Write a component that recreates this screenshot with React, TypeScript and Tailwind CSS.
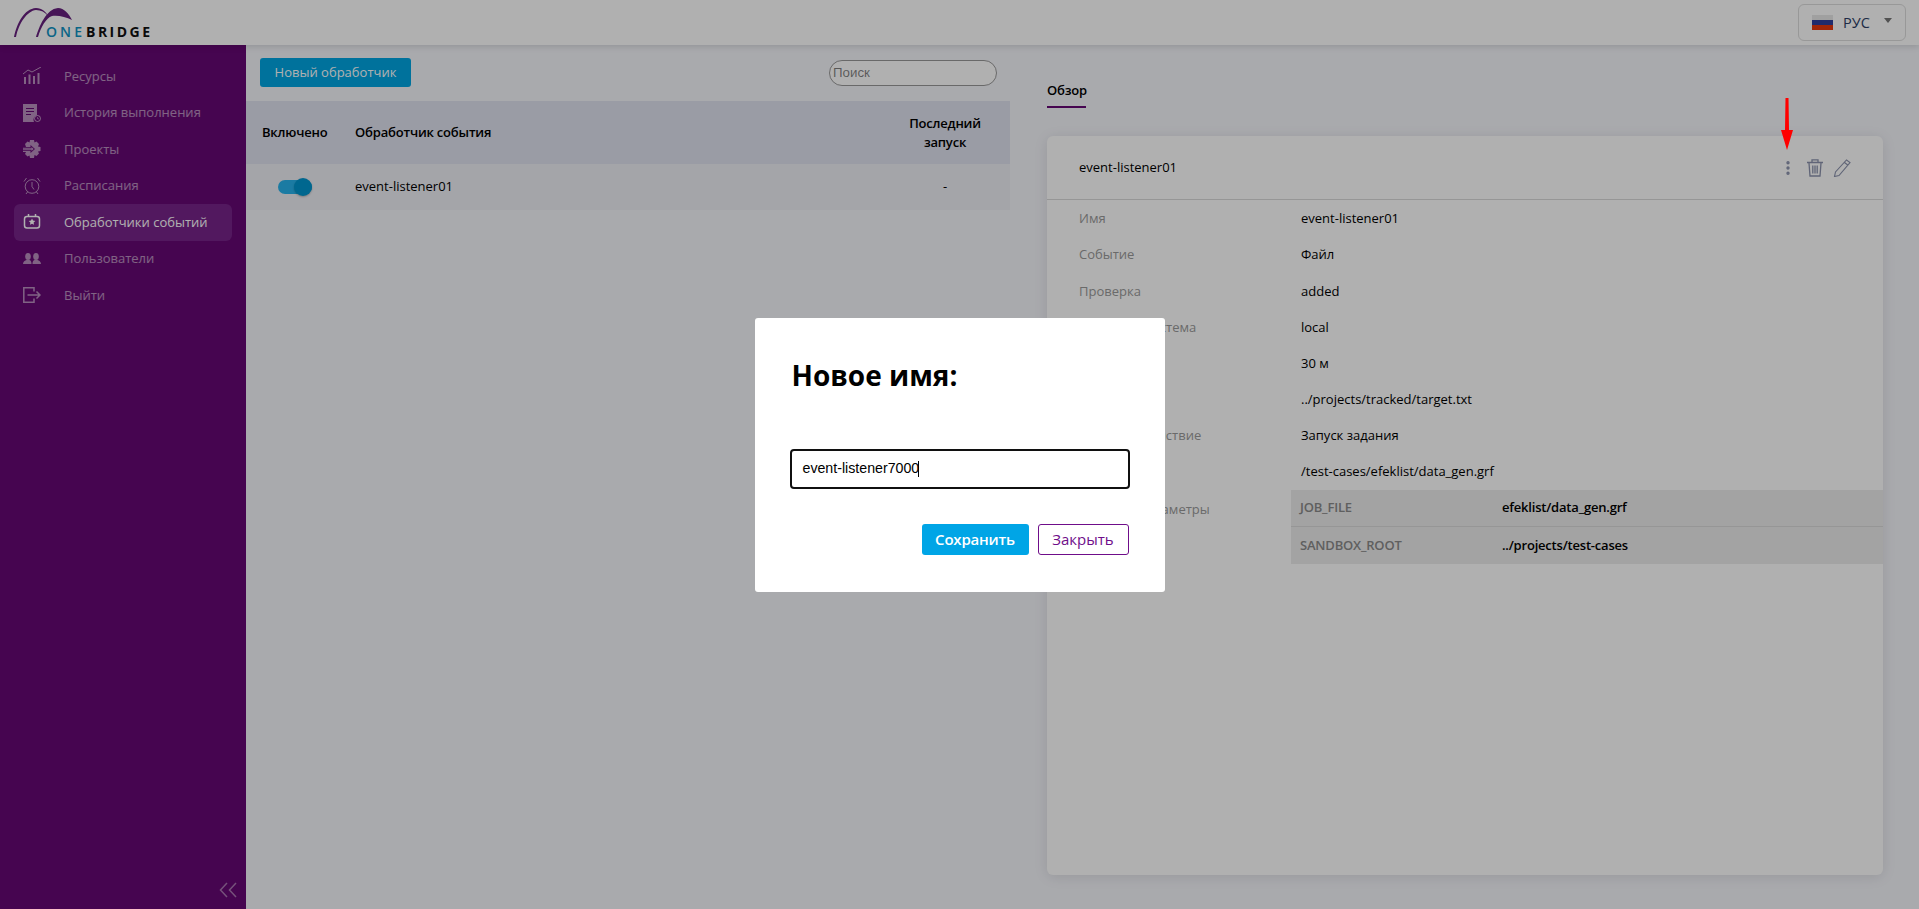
import { MoreVertical } from 'lucide-react';

const menu = [
  { label: 'Ресурсы', icon: <ChartIcon /> },
  { label: 'История выполнения', icon: <HistoryIcon /> },
  { label: 'Проекты', icon: <GearIcon /> },
  { label: 'Расписания', icon: <AlarmIcon /> },
  { label: 'Обработчики событий', icon: <EventIcon />, active: true },
  { label: 'Пользователи', icon: <UsersIcon /> },
  { label: 'Выйти', icon: <LogoutIcon /> },
];

const details = [
  ['Имя', 'event-listener01'],
  ['Событие', 'Файл'],
  ['Проверка', 'added'],
  ['Файловая система', 'local'],
  ['Интервал', '30 м'],
  ['Путь', '../projects/tracked/target.txt'],
  ['Ответное действие', 'Запуск задания'],
  ['Задание', '/test-cases/efeklist/data_gen.grf'],
];

function ChartIcon() {
  return (
    <svg viewBox="0 0 18 18" className="w-[18px] h-[18px]" fill="none" stroke="currentColor">
      <path d="M0 7 L5 3 L9 5 L18 0" strokeWidth="1" />
      <path d="M2 10v7M6.500 7.500v9.500M11 9v8M15.500 6v11" strokeWidth="2" />
    </svg>
  );
}

function HistoryIcon() {
  return (
    <svg viewBox="0 0 18 18" className="w-[18px] h-[18px]" fill="currentColor">
      <path d="M0 0h14v11a5 5 0 0 0-3 7H0z" />
      <path d="M3 4h8v1H3zM3 7h8v1H3zM3 10h5v1H3z" fill="#660874" />
      <circle cx="14.500" cy="14.500" r="3" fill="none" stroke="currentColor" />
      <path d="M14.500 13v1.800h1.500" fill="none" stroke="currentColor" strokeWidth="0.700" />
    </svg>
  );
}

function GearIcon() {
  return (
    <svg viewBox="0 0 18 18" className="w-[18px] h-[18px]" fill="currentColor">
      <path d="M7 0h4l.5 2.500 2-1 2.500 2.500-1 2.500 2.500.5v4l-2.500.5 1 2-2.500 2.500-2-1L11 18H7l-.5-2.500-2 1L2 14l1-2H0V7h3L2 4l2.500-2.500 2 1z" />
      <path d="M0 7.300h7.500V5l4.500 4-4.500 4v-2.300H0z" fill="#660874" />
      <path d="M0 8.300h8.500V7l2.200 2-2.200 2V9.700H0z" />
    </svg>
  );
}

function AlarmIcon() {
  return (
    <svg viewBox="0 0 18 18" className="w-[18px] h-[18px]" fill="none" stroke="currentColor" strokeWidth="1">
      <circle cx="9" cy="9.500" r="6.800" />
      <path d="M9 5v4.500l2 3" />
      <path d="M1 4.500 3.500 1M17 4.500 14.500 1M3 17l1.500-2M15 17l-1.500-2" />
    </svg>
  );
}

function EventIcon() {
  return (
    <svg viewBox="0 0 18 18" className="w-[18px] h-[18px]" fill="none" stroke="currentColor" strokeWidth="1.500">
      <rect x="1.500" y="3.500" width="15" height="11.500" rx="2.500" />
      <path d="M5.500 1v3M12.500 1v3" />
      <path d="m9 5.500 1 2.100 2.300.3-1.700 1.600.4 2.300-2-1.100-2 1.100.4-2.300-1.700-1.600 2.300-.3z" fill="currentColor" stroke="none" />
    </svg>
  );
}

function UsersIcon() {
  return (
    <svg viewBox="0 0 18 12" className="w-[18px] h-[12px]" fill="currentColor">
      <ellipse cx="5" cy="3.500" rx="2.800" ry="3.500" />
      <ellipse cx="13" cy="3.500" rx="2.800" ry="3.500" />
      <path d="M0 11c0-2.500 2-3.500 3.500-4h3C8 7.500 8.500 9 8.500 11zM9.500 11c0-2 .5-3.500 2-4h3c1.500.5 3.500 1.500 3.500 4z" />
    </svg>
  );
}

function LogoutIcon() {
  return (
    <svg viewBox="0 0 18 16" className="w-[18px] h-[16px]" fill="none" stroke="currentColor" strokeWidth="1.500">
      <path d="M11 4.500V.800H.8v14.400H11v-3.700" />
      <path d="M4.500 8h12.500M13.500 4.500 17 8l-3.500 3.500" />
    </svg>
  );
}

function Logo() {
  return (
    <svg viewBox="0 0 160 40" className="w-[160px] h-[40px]">
      <path d="M14 34C17 20 24 6 36 5c6 0 10 4 12 8-3-4-7-6-12-6C27 8 19 20 16 34z" fill="#67207e" />
      <path d="M36 34c3-10 10-28 22-29 6 0 11 6 14 12-6-3-14-5-20-4C46 15 41 24 38 34z" fill="#67207e" />
      <text x="46" y="33.500" fontFamily="'Open Sans', sans-serif" fontSize="14" fontWeight="600" textLength="36" lengthAdjust="spacing" fill="#0f93c4">ONE</text>
      <text x="86" y="33.500" fontFamily="'Open Sans', sans-serif" fontSize="14" fontWeight="700" textLength="64" lengthAdjust="spacing" fill="#111111">BRIDGE</text>
    </svg>
  );
}

export default function App() {
  return (
    <div className="relative h-[909px] w-full overflow-hidden flex flex-col bg-[#f5f6fb] font-['Open_Sans',sans-serif] text-[13px] text-black">
      {/* Header */}
      <header className="h-[45px] shrink-0 bg-white flex items-center justify-between pr-[13px] shadow-[0_2px_6px_rgba(0,0,0,0.12)] z-10">
        <Logo />
        <button className="h-[37px] w-[108px] border border-[#dcdcdc] rounded-md flex items-center pl-[13px] text-[#2d3e66] text-[14.500px]">
          <span className="w-[21px] h-[15px] flex flex-col mr-[10px]">
            <span className="flex-1 bg-[#e8e8e8]" />
            <span className="flex-1 bg-[#2f3f9e]" />
            <span className="flex-1 bg-[#e8380c]" />
          </span>
          РУС
          <span className="ml-[14px] mb-[4px] w-0 h-0 border-x-[4px] border-x-transparent border-t-[5px] border-t-[#777777]" />
        </button>
      </header>

      <div className="flex flex-1 min-h-0">
        {/* Sidebar */}
        <aside className="w-[246px] shrink-0 bg-[#660874] flex flex-col pt-[13px]">
          <nav className="flex flex-col">
            {menu.map((item) => (
              <a
                key={item.label}
                className={
                  item.active
                    ? 'mx-[14px] h-[36.500px] flex items-center pl-[9px] rounded-md bg-[#77248a] text-white'
                    : 'mx-[14px] h-[36.500px] flex items-center pl-[9px] rounded-md text-white/55'
                }
              >
                <span className="w-[18px] flex justify-center shrink-0">{item.icon}</span>
                <span className="ml-[23px] text-[13px]">{item.label}</span>
              </a>
            ))}
          </nav>
          <div className="mt-auto flex justify-end pr-[9px] pb-[11px] text-white/45">
            <svg viewBox="0 0 18 16" className="w-[18px] h-[16px]" fill="none" stroke="currentColor" strokeWidth="1.500">
              <path d="M8 1 1.500 8 8 15M17 1l-6.500 7 6.500 7" />
            </svg>
          </div>
        </aside>

        {/* Event listener list */}
        <section className="w-[764px] shrink-0 pt-[13px]">
          <div className="flex items-center justify-between pl-[14px] pr-[13px] h-[29px]">
            <button className="h-[29px] w-[151px] rounded-[3px] bg-[#00a6e3] text-white text-[13px]">Новый обработчик</button>
            <input
              placeholder="Поиск"
              className="h-[26px] w-[168px] rounded-full border border-[#999999] bg-white px-[3px] font-['Liberation_Sans',sans-serif] text-[13.300px]"
            />
          </div>
          <div className="mt-[14px] h-[63px] pt-[1px] bg-[#dfe2ef] flex items-center font-semibold tracking-[-0.2px]">
            <div className="w-[109px] pl-[16px]">Включено</div>
            <div className="flex-1">Обработчик события</div>
            <div className="w-[130px] px-[16px] text-center leading-[19px]">Последний запуск</div>
          </div>
          <div className="h-[46px] bg-[#eeeff5] flex items-center">
            <div className="w-[109px] pl-[32px]">
              <div className="relative w-[34px] h-[14px] rounded-full bg-[#28b3ec]">
                <span className="absolute right-0 top-[-2px] w-[18px] h-[18px] rounded-full bg-[#0096cf] shadow-[0_1px_2px_rgba(0,0,0,0.25)]" />
              </div>
            </div>
            <div className="flex-1">event-listener01</div>
            <div className="w-[130px] text-center">-</div>
          </div>
        </section>

        {/* Overview */}
        <section className="flex-1 min-w-0 pl-[37px] pr-[36px] pt-[36px] flex flex-col pb-[34px]">
          <div className="w-[39px] h-[27px] border-b-2 border-[#660874] text-[13px] font-semibold tracking-[-0.2px]">Обзор</div>
          <div className="mt-[28px] flex-1 bg-white rounded-md shadow-[0_2px_14px_rgba(0,0,0,0.1)]">
            <div className="h-[64px] border-b border-[#dadada] flex items-center justify-between pl-[32px] pr-[32px]">
              <span>event-listener01</span>
              <div className="flex items-center text-[#8b92ad]">
                <MoreVertical className="w-[18px] h-[20px]" strokeWidth={2.500} />
                <svg viewBox="0 0 16 18" className="ml-[10px] w-[16px] h-[18px]" fill="none" stroke="currentColor" strokeWidth="1.300">
                  <path d="M0 3.500h16M5 3V.8h6V3M2 4l1 13h10l1-13M5.800 6.500v8M8 6.500v8M10.200 6.500v8" />
                </svg>
                <svg viewBox="0 0 18 18" className="ml-[10px] w-[18px] h-[18px]" fill="none" stroke="currentColor" strokeWidth="1.100">
                  <path d="M13.500 1 17 3.500 6 16.500 1.500 17.500 2.500 13zM11.500 3.500l3.500 2.700" />
                </svg>
              </div>
            </div>
            <div className="pt-[1px]">
              {details.map(([name, value]) => (
                <div key={name} className="h-[36.125px] flex items-center pl-[32px]">
                  <div className="w-[222px] text-[#9a9a9a]">{name}</div>
                  <div>{value}</div>
                </div>
              ))}
              <div className="flex pl-[32px]">
                <div className="w-[212px] pt-[10px] text-[#9a9a9a]">Входные параметры</div>
                <div className="flex-1 bg-[#ececec] font-semibold tracking-[-0.2px]">
                  <div className="h-[37px] border-b border-[#dadada] flex items-center pl-[9px]">
                    <span className="w-[202px] text-[#8a8a8a]">JOB_FILE</span>
                    <span>efeklist/data_gen.grf</span>
                  </div>
                  <div className="h-[37px] flex items-center pl-[9px]">
                    <span className="w-[202px] text-[#8a8a8a]">SANDBOX_ROOT</span>
                    <span>../projects/test-cases</span>
                  </div>
                </div>
              </div>
            </div>
          </div>
        </section>
      </div>

      {/* Modal */}
      <div className="absolute inset-0 z-20 bg-black/[0.31] flex items-center justify-center">
        <div className="w-[410px] h-[274px] bg-white rounded-[3px] pl-[35px] pr-[35px] pt-[36px] flex flex-col">
          <h2 className="ml-[2px] text-[28px] leading-[42px] font-bold text-black">Новое имя:</h2>
          <div className="mt-[53px] h-[40px] border-2 border-[#101010] rounded-[4px] flex items-center pl-[11px] font-['Liberation_Sans',sans-serif] text-[14.200px]">
            event-listener7000
            <span className="inline-block w-px h-[16px] bg-black -ml-[1px]" />
          </div>
          <div className="mt-[35px] pr-[1px] flex justify-end gap-[9px]">
            <button className="h-[31px] w-[107px] rounded-[3px] bg-[#00a5e6] text-white text-[15px] font-semibold tracking-[-0.2px]">Сохранить</button>
            <button className="h-[31px] w-[91px] rounded-[3px] border border-[#6f0d8a] text-[#6f0d8a] text-[15px]">Закрыть</button>
          </div>
        </div>
      </div>

      {/* Annotation arrow */}
      <svg viewBox="0 0 12 52" className="absolute left-[1781px] top-[98px] w-[12px] h-[52px] z-30">
        <path d="M4.500 0h3l.5 32h4L6 52 0 32h4z" fill="#ff0000" />
      </svg>
    </div>
  );
}
